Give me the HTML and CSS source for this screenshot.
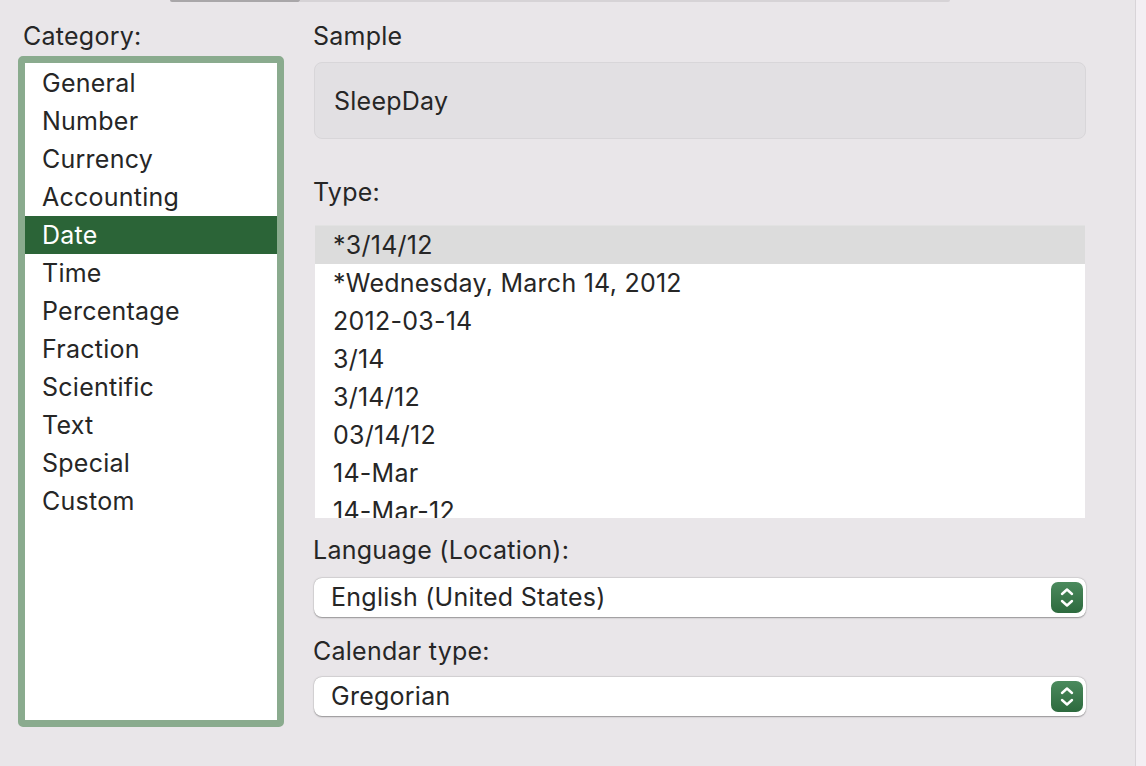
FILE: index.html
```
<!DOCTYPE html>
<html>
<head>
<meta charset="utf-8">
<link rel="stylesheet" href="styles.css">
</head>
<body>
<div class="page">
  <main class="panel">
    <div class="topbar"><div class="seg-selected"></div><div class="seg-rest"></div></div>
    <div class="content">
      <section class="left">
        <div class="label">Category:</div>
        <ul class="catlist">
          <li>General</li>
          <li>Number</li>
          <li>Currency</li>
          <li>Accounting</li>
          <li class="selected">Date</li>
          <li>Time</li>
          <li>Percentage</li>
          <li>Fraction</li>
          <li>Scientific</li>
          <li>Text</li>
          <li>Special</li>
          <li>Custom</li>
        </ul>
      </section>
      <section class="right">
        <div class="label">Sample</div>
        <div class="sample">SleepDay</div>
        <div class="label label-type">Type:</div>
        <ul class="typelist">
          <li class="hl">*3/14/12</li>
          <li>*Wednesday, March 14, 2012</li>
          <li>2012-03-14</li>
          <li>3/14</li>
          <li>3/14/12</li>
          <li>03/14/12</li>
          <li>14-Mar</li>
          <li>14-Mar-12</li>
        </ul>
        <div class="label label-lang">Language (Location):</div>
        <div class="popup">
          <span>English (United States)</span>
          <span class="stepper"><svg width="32" height="31" viewBox="0 0 32 31"><path d="M11 12 L16 7.5 L21 12 M11 19 L16 23.5 L21 19" fill="none" stroke="#fff" stroke-width="2.4" stroke-linecap="round" stroke-linejoin="round"/></svg></span>
        </div>
        <div class="label label-cal">Calendar type:</div>
        <div class="popup popup-cal">
          <span>Gregorian</span>
          <span class="stepper"><svg width="32" height="31" viewBox="0 0 32 31"><path d="M11 12 L16 7.5 L21 12 M11 19 L16 23.5 L21 19" fill="none" stroke="#fff" stroke-width="2.4" stroke-linecap="round" stroke-linejoin="round"/></svg></span>
        </div>
      </section>
    </div>
  </main>
  <aside class="edge"></aside>
</div>
</body>
</html>
```
FILE: styles.css
```
* { box-sizing: border-box; }
html, body { margin: 0; padding: 0; }
body {
  font-family: Inter, "Liberation Sans", sans-serif;
  font-size: 25px;
  letter-spacing: 0.25px;
  color: #262626;
  background: #e9e6e9;
  width: 1146px;
  height: 766px;
  overflow: hidden;
}
.page { display: flex; height: 766px; }
.panel {
  width: 1136px;
  border-right: 1px solid #d8d4d8;
  background: #e9e6e9;
}
.edge { flex: 1; background: #f3eff3; }
.topbar { display: flex; height: 3px; padding-left: 170px; }
.seg-selected { width: 130px; height: 2px; background: #a9a7a9; border-radius: 0 0 3px 3px; }
.seg-rest { width: 650px; height: 2px; background: #d6d3d6; border-radius: 0 0 3px 0; }
.content { display: flex; padding: 19px 0 0 18px; }
.left { width: 266px; }
.right { width: 773px; margin-left: 29px; }
.label {
  line-height: 28px;
  height: 28px;
  white-space: nowrap;
}
.left .label { padding-left: 5px; margin-bottom: 6px; }
ul { list-style: none; margin: 0; padding: 0; }
.catlist {
  height: 671px;
  border: 7px solid #8aab8e;
  border-radius: 5px;
  background: #fff;
  padding-top: 1px;
}
.catlist li {
  height: 38px;
  line-height: 38px;
  padding-left: 17px;
}
.catlist li.selected { background: #2b6437; color: #fff; }
.sample {
  margin: 12px 0 0 1px;
  width: 772px;
  height: 77px;
  background: #e2e0e3;
  border: 1px solid #d8d6d9;
  border-radius: 8px;
  line-height: 76px;
  padding-left: 19px;
}
.label-type { margin-top: 39px; }
.typelist {
  margin: 19px 0 0 2px;
  width: 770px;
  height: 293px;
  overflow: hidden;
  background: #fff;
  border-top: 1px solid #e2e2e2;
}
.typelist li {
  height: 38px;
  line-height: 38px;
  padding-left: 18px;
  white-space: nowrap;
}
.typelist li.hl { background: #dcdcdc; }
.label-lang { margin-top: 18px; }
.label-cal { margin-top: 20px; }
.popup {
  margin: 14px 0 0 1px;
  width: 772px;
  height: 39px;
  background: #fff;
  border-radius: 8px;
  box-shadow: 0 0.5px 1.5px rgba(0,0,0,0.35), 0 0 0 0.5px rgba(0,0,0,0.06);
  display: flex;
  align-items: center;
  justify-content: space-between;
  padding: 0 3px 1px 17px;
}
.popup-cal { margin-top: 12px; }
.stepper {
  width: 32px;
  height: 31px;
  border-radius: 7px;
  background: linear-gradient(#4b8a5d, #2d6a3e);
  display: block;
  margin-top: 1px;
}
.stepper svg { display: block; }
```
